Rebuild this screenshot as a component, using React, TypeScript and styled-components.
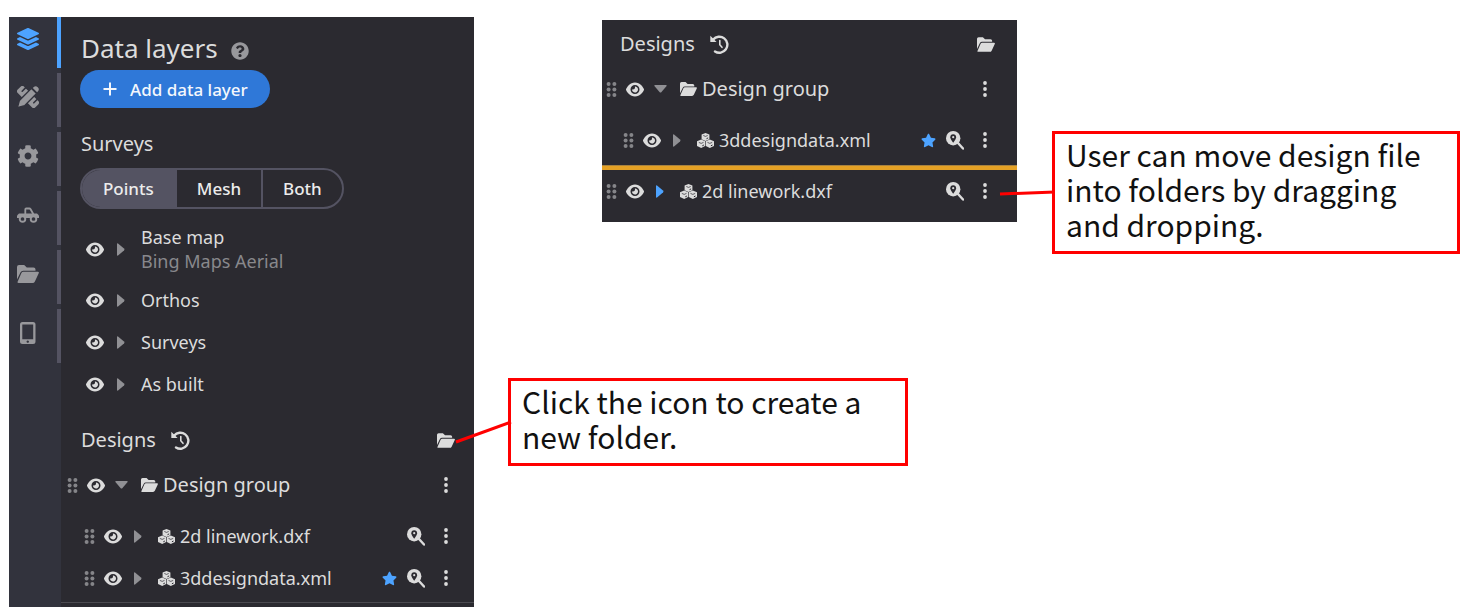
import React from "react";
import styled, { createGlobalStyle, css } from "styled-components";
import { FaLayerGroup, FaCog, FaQuestionCircle, FaStar } from "react-icons/fa";
import { FaEye } from "react-icons/fa6";

const Global = createGlobalStyle`
  * { box-sizing: border-box; }
  body { margin: 0; background: #fff; }
  button { font: inherit; color: inherit; background: none; border: 0; padding: 0; cursor: pointer; }
  h1, h2, p, ul { margin: 0; padding: 0; font-weight: 400; }
  ul { list-style: none; }
`;

const Page = styled.main`
  display: grid;
  grid-template-columns: minmax(0, 465fr) minmax(0, 952fr);
  column-gap: 34px;
  align-items: start;
  padding: 17px 10px 6px 9px;
  font-family: "Noto Sans", "Open Sans", sans-serif;
`;

const AppWindow = styled.section`
  display: flex;
  background: #2b2a30;
  color: #dcdcdc;
`;

const Rail = styled.nav`
  display: flex;
  flex-direction: column;
  gap: 5px;
  width: 52px;
  flex: none;
  background: #32333d;
`;

const RailButton = styled.button<{ $active?: boolean }>`
  display: flex;
  align-items: center;
  height: ${(p) => (p.$active ? 51 : 54)}px;
  padding: 0 0 ${(p) => (p.$active ? 8 : 6)}px 8px;
  border-right: 4px solid ${(p) => (p.$active ? "#4da3ff" : "#545362")};
  color: ${(p) => (p.$active ? "#4da3ff" : "#98989c")};
  svg { width: 22px; height: 22px; }
`;

const Content = styled.div`
  flex: 1;
  min-width: 0;
`;

const Head = styled.header`
  display: flex;
  align-items: center;
  gap: 13px;
  height: 53px;
  padding: 8px 0 0 20px;
`;

const Title = styled.h1`
  font-size: 26px;
  line-height: 36px;
`;

const HelpButton = styled.button`
  display: flex;
  padding-top: 6px;
  color: #98989c;
  svg { width: 18px; height: 18px; }
`;

const AddButton = styled.button`
  display: flex;
  align-items: center;
  gap: 12px;
  height: 38px;
  margin-left: 19px;
  padding: 0 22px;
  border-radius: 20px;
  background: #2f78d8;
  color: #f4f7fc;
  font-size: 17px;
  font-weight: 500;
  svg { width: 16px; height: 16px; }
`;

const Subtitle = styled.h2`
  font-size: 20px;
  line-height: 28px;
`;

const SurveysTitle = styled(Subtitle)`
  margin: 22px 0 10px 20px;
`;

const Segments = styled.div`
  display: inline-flex;
  height: 41px;
  margin-left: 19px;
  border: 2px solid #545362;
  border-radius: 21px;
  overflow: hidden;
`;

const Segment = styled.button<{ $on?: boolean }>`
  padding: 0 20px;
  font-size: 17px;
  font-weight: 500;
  color: #ececec;
  background: ${(p) => (p.$on ? "#545362" : "transparent")};
  & + & { border-left: 2px solid #545362; }
  &:first-child { padding: 0 21px; }
`;

const SurveyList = styled.ul`
  padding: 10px 0 20px;
`;

const SurveyRow = styled.li<{ $tall?: boolean }>`
  display: grid;
  grid-template-columns: 20px 10px 1fr;
  column-gap: 10px;
  align-items: center;
  height: ${(p) => (p.$tall ? 60 : 42)}px;
  padding-left: 25px;
  font-size: 18px;
  line-height: 24px;
`;

const SurveyName = styled.div`
  padding-left: 5px;
  small { display: block; font-size: 18px; color: #88888c; }
`;

const IconButton = styled.button`
  display: flex;
  align-items: center;
  justify-content: center;
`;

const DesignsHead = styled.header<{ $docked?: boolean }>`
  display: flex;
  align-items: center;
  gap: 15px;
  height: 30px;
  padding: ${(p) => (p.$docked ? "0 19px 0 20px" : "0 22px 0 18px")};
  & > :last-child { margin-left: auto; }
`;

const DesignList = styled.ul<{ $docked?: boolean }>`
  padding: ${(p) => (p.$docked ? "0 17px 3px 6px" : "0 21px 0 4px")};
`;

const Row = styled.li<{ $nested?: boolean; $group?: boolean }>`
  display: flex;
  align-items: center;
  height: ${(p) => (p.$group ? 60 : 42)}px;
  padding-left: ${(p) => (p.$nested ? 17 : 0)}px;
  font-size: 18px;
`;

const Grip = styled.span`
  display: flex;
  width: 20px;
  flex: none;
  color: #858589;
`;

const EyeCell = styled(IconButton)`
  width: 18px;
  flex: none;
`;

const CaretCell = styled(IconButton)`
  width: 32px;
  flex: none;
`;

const Kind = styled.span`
  display: flex;
  width: 26px;
  padding-left: 4px;
  flex: none;
`;

const Name = styled.span<{ $group?: boolean }>`
  flex: 1;
  font-size: ${(p) => (p.$group ? 20 : 18)}px;
  line-height: 28px;
  white-space: nowrap;
`;

const Actions = styled.span`
  display: flex;
  align-items: center;
  gap: 10px;
`;

const MoreButton = styled(IconButton)`
  width: 22px;
`;

const PanelEnd = styled.div`
  height: 5px;
  border-top: 1px solid #4b4a50;
`;

const Side = styled.div`
  display: flex;
  flex-direction: column;
`;

const SideTop = styled.div`
  display: grid;
  grid-template-columns: minmax(0, 415fr) minmax(0, 408fr);
  column-gap: 35px;
  align-items: start;
  padding: 3px 0 0 94px;
`;

const DesignsPanel = styled.section`
  padding: 9px 0 10px;
  background: #2b2a30;
  color: #dcdcdc;
`;

const DropLine = styled.div`
  height: 5px;
  margin-top: 4px;
  border-top: 1px solid #a8823f;
  background: #e5a125;
`;

const Callout = styled.aside<{ $lower?: boolean }>`
  position: relative;
  border: 3px solid #ff0000;
  background: #fff;
  color: #111;
  font-family: "Noto Sans CJK JP", "Liberation Sans", sans-serif;
  font-weight: 300;
  font-size: 30px;
  line-height: 35px;
  padding: 3px 11px 9px;
  ${(p) => p.$lower
    ? css`width: 42%; min-width: 400px; margin-top: 124px;`
    : css`margin-top: 111px;`}
`;

const Connector = styled.svg`
  position: absolute;
  right: 100%;
  top: 40px;
  overflow: visible;
`;

const Plus = () => (
  <svg viewBox="0 0 16 16" aria-hidden="true"><path d="M8 1.500v13M1.500 8h13" stroke="currentColor" strokeWidth="2" /></svg>
);

const Caret = ({ open, color = "#909094" }: { open?: boolean; color?: string }) =>
  open ? (
    <svg width="13" height="8" viewBox="0 0 13 8"><path d="M1 0h11q1 0 .6 1L7.500 7q-1 1-2 0L.4 1Q0 0 1 0z" fill={color} /></svg>
  ) : (
    <svg width="8" height="13" viewBox="0 0 8 13"><path d="M0 1v11q0 1 1 .6L7 7.500q1-1 0-2L1 .4Q0 0 0 1z" fill={color} /></svg>
  );

const Tools = () => (
  <svg viewBox="0 0 22 22">
    <g transform="rotate(45 11 11)">
      <rect x="-1.500" y="6.500" width="25" height="9" rx="2.500" fill="currentColor" />
      <path d="M2.800 6v5M19.200 6v5" stroke="#32333d" strokeWidth="1.600" strokeLinecap="round" />
      <path d="M7.300 2.500h7.400v17L11 26l-3.700-6.500z" fill="currentColor" stroke="#32333d" strokeWidth="1.400" />
      <path d="M8 1.200V-.2Q8.200-2.800 11-2.800t3 2.600v1.400z" fill="currentColor" />
    </g>
  </svg>
);

const Buggy = () => (
  <svg viewBox="0 0 22 22" fill="none" stroke="currentColor">
    <path d="M8.300 11V5.500q0-1 1-1h3q.8 0 1.300.8l2.800 5" strokeWidth="1.800" />
    <path d="M2 9.500h18l2 2V14H0v-2.500z" fill="currentColor" stroke="none" />
    <circle cx="5.500" cy="15" r="2.800" strokeWidth="1.900" fill="#32333d" />
    <circle cx="16.500" cy="15" r="2.800" strokeWidth="1.900" fill="#32333d" />
  </svg>
);

const Tablet = () => (
  <svg viewBox="0 0 22 22">
    <path fillRule="evenodd" fill="currentColor" d="M5.500 0h10.500q2.500 0 2.500 2.500v17q0 2.500-2.500 2.500H5.500Q3 22 3 19.500v-17Q3 0 5.500 0zM5.300 2.500v14.700h10.900V2.500zM10.700 18.400a1.200 1.200 0 1 0 .1 0z" />
  </svg>
);

const Folder = ({ width = 18, height = 15 }: { width?: number; height?: number }) => (
  <svg width={width} height={height} viewBox="0 0 22 18" fill="currentColor">
    <path d="M0 14.500V2Q0 0 2 0h5.200l2.600 2.500h6.700q2 0 2 2v1.200H6.200q-1.800 0-2.600 1.600z" />
    <path d="M6.400 6.800h14.400q1.600 0 .9 1.500l-3.800 8.200Q17.200 18 15.600 18H1.600Q0 18 .7 16.500l3.700-8.400q.6-1.300 2-1.300z" />
  </svg>
);

const History = () => (
  <svg width="19" height="19" viewBox="0 0 19 19" fill="none" stroke="currentColor">
    <path d="M3.200 4.600A8 8 0 1 1 5 16.400" strokeWidth="2.400" strokeLinecap="round" />
    <path d="M.3.800v6.300h6.300z" fill="currentColor" stroke="none" />
    <path d="M9.800 5.500v4.300l2.200 2.500" strokeWidth="1.600" strokeLinecap="round" />
  </svg>
);

const GripDots = () => (
  <svg width="11" height="15" viewBox="0 0 11 15" fill="currentColor">
    {[2, 7.5, 13].map((y) => [2.6, 8.4].map((x) => <circle key={`${x}-${y}`} cx={x} cy={y} r="2" />))}
  </svg>
);

const MoreDots = () => (
  <svg width="4" height="16" viewBox="0 0 4 16" fill="currentColor">
    {[2, 8, 14].map((y) => <circle key={y} cx="2" cy={y} r="1.900" />)}
  </svg>
);

const Locate = () => (
  <svg width="18" height="19" viewBox="0 0 18 19">
    <circle cx="7.200" cy="7.200" r="7.200" fill="currentColor" />
    <path d="M12 12l5 5.500" stroke="currentColor" strokeWidth="2.400" strokeLinecap="round" />
    <path d="M7.200 11.800Q4.300 8 4.300 6.200a2.900 2.900 0 0 1 5.800 0Q10.100 8 7.200 11.800z" fill="#2b2a30" />
    <circle cx="7.200" cy="6.200" r="1.100" fill="currentColor" />
  </svg>
);

const Cubes = () => (
  <svg width="17" height="15" viewBox="0 0 17 15" fill="currentColor">
    <path d="M8.500 0l3.900 1.600v4.700L8.500 8 4.600 6.300V1.600z" />
    <path d="M4.200 6.500l4 1.700v4.900l-4 1.900-4.200-1.900V8.200z" />
    <path d="M12.800 6.500l4.200 1.700v4.900L12.800 15l-4-1.900V8.200z" />
    <path d="M6.300 2.500l2.200.9 2.200-.9M1.800 9.400l2.400 1 2.300-1M10.500 9.400l2.300 1 2.400-1" stroke="#2b2a30" strokeWidth=".7" fill="none" />
    <path d="M9.500 5.700l1.600-.8M5.300 12.800l1.600-.8M13.900 12.800l1.600-.8" stroke="#2b2a30" strokeWidth="1" fill="none" />
  </svg>
);

const Eye = ({ name }: { name: string }) => (
  <EyeCell aria-label={`Show ${name}`}><FaEye size={19} /></EyeCell>
);

type DesignProps = {
  name: string; group?: boolean; nested?: boolean; star?: boolean; caretColor?: string;
};

const DesignRow = ({ name, group, nested, star, caretColor }: DesignProps) => (
  <Row $group={group} $nested={nested}>
    <Grip><GripDots /></Grip>
    <Eye name={name} />
    <CaretCell aria-label={`Expand ${name}`}><Caret open={group} color={caretColor} /></CaretCell>
    <Kind>{group ? <Folder width={17} height={14} /> : <Cubes />}</Kind>
    <Name $group={group}>{name}</Name>
    <Actions>
      {star && <FaStar size={15} color="#4da3ff" />}
      {!group && <IconButton aria-label={`Locate ${name}`}><Locate /></IconButton>}
      <MoreButton aria-label={`More for ${name}`}><MoreDots /></MoreButton>
    </Actions>
  </Row>
);

const DesignsBar = ({ docked }: { docked?: boolean }) => (
  <DesignsHead $docked={docked}>
    <Subtitle>Designs</Subtitle>
    <IconButton aria-label="History"><History /></IconButton>
    <IconButton aria-label="New folder"><Folder /></IconButton>
  </DesignsHead>
);

const rail = [
  { label: "Data layers", icon: <FaLayerGroup /> },
  { label: "Design tools", icon: <Tools /> },
  { label: "Settings", icon: <FaCog /> },
  { label: "Machines", icon: <Buggy /> },
  { label: "Files", icon: <Folder /> },
  { label: "Devices", icon: <Tablet /> },
];

const surveys = [
  { name: "Base map", note: "Bing Maps Aerial" },
  { name: "Orthos" },
  { name: "Surveys" },
  { name: "As built" },
];

export default function App() {
  return (
    <>
      <Global />
      <Page>
        <AppWindow>
          <Rail>
            {rail.map((r, i) => (
              <RailButton key={r.label} $active={i === 0} aria-label={r.label}>{r.icon}</RailButton>
            ))}
          </Rail>
          <Content>
            <Head>
              <Title>Data layers</Title>
              <HelpButton aria-label="Help"><FaQuestionCircle /></HelpButton>
            </Head>
            <AddButton><Plus />Add data layer</AddButton>
            <SurveysTitle>Surveys</SurveysTitle>
            <Segments>
              <Segment $on>Points</Segment>
              <Segment>Mesh</Segment>
              <Segment>Both</Segment>
            </Segments>
            <SurveyList>
              {surveys.map((s) => (
                <SurveyRow key={s.name} $tall={!!s.note}>
                  <Eye name={s.name} />
                  <IconButton aria-label={`Expand ${s.name}`}><Caret /></IconButton>
                  <SurveyName>{s.name}{s.note && <small>{s.note}</small>}</SurveyName>
                </SurveyRow>
              ))}
            </SurveyList>
            <DesignsBar docked />
            <DesignList $docked>
              <DesignRow name="Design group" group />
              <DesignRow name="2d linework.dxf" nested />
              <DesignRow name="3ddesigndata.xml" nested star />
            </DesignList>
            <PanelEnd />
          </Content>
        </AppWindow>
        <Side>
          <SideTop>
            <DesignsPanel>
              <DesignsBar />
              <DesignList>
                <DesignRow name="Design group" group />
                <DesignRow name="3ddesigndata.xml" nested star />
              </DesignList>
              <DropLine />
              <DesignList>
                <DesignRow name="2d linework.dxf" caretColor="#4da3ff" />
              </DesignList>
            </DesignsPanel>
            <Callout>
              <Connector width="55" height="30" viewBox="0 0 55 30">
                <path d="M0 20L55 18" stroke="#ff0000" strokeWidth="3" />
              </Connector>
              <p>User can move design file into folders by dragging and dropping.</p>
            </Callout>
          </SideTop>
          <Callout $lower>
            <Connector width="55" height="30" viewBox="0 0 55 30">
              <path d="M0 21L55 1" stroke="#ff0000" strokeWidth="3" />
            </Connector>
            <p>Click the icon to create a new folder.</p>
          </Callout>
        </Side>
      </Page>
    </>
  );
}
